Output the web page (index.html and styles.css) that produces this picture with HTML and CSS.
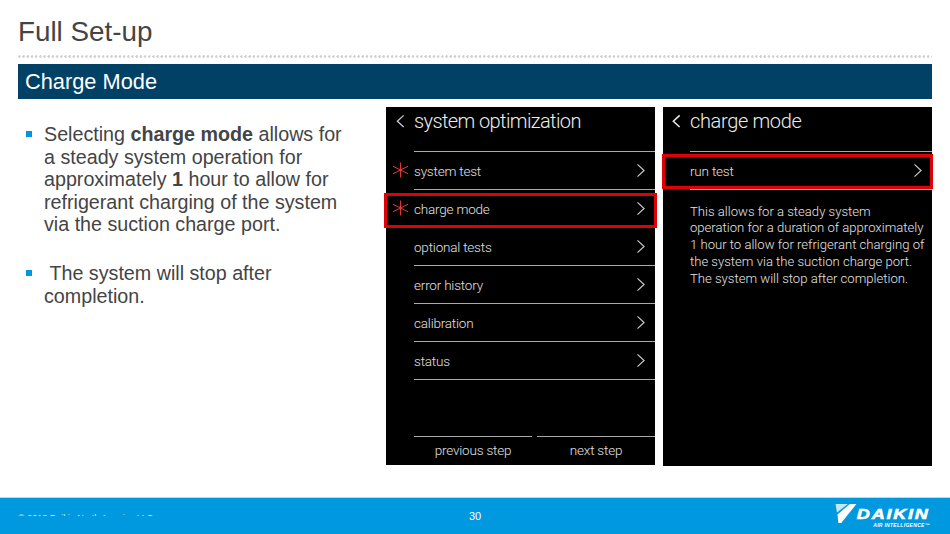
FILE: index.html
```html
<!DOCTYPE html>
<html lang="en">
<head>
  <meta charset="UTF-8" />
  <title>Full Set-up</title>
  <link rel="stylesheet" href="styles.css">
</head>
<body>
  <div class="slide">
    <h1 class="title">Full Set-up</h1>
    <div class="dots"></div>
    <h2 class="band">Charge Mode</h2>

    <div class="content">
      <div class="notes">
        <p class="note">Selecting <b>charge mode</b> allows for a steady system operation for approximately <b>1</b> hour to allow for refrigerant charging of the system via the suction charge port.</p>
        <p class="note">&nbsp;The system will stop after completion.</p>
      </div>

      <!-- left phone screen -->
      <div class="screen screen-left">
        <div class="screen-head">
          <svg class="back" viewBox="0 0 10 16"><path d="M8.5 1.5 1.5 8l7 6.5" /></svg>
          <span>system optimization</span>
        </div>
        <div class="rows">
          <div class="row first">
            <svg class="star" viewBox="0 0 20 20"><path d="M10 0v20M0 5l20 10M20 5 0 15" /></svg>
            <span>system test</span>
            <svg class="chev" viewBox="0 0 10 16"><path d="M1.5 1.5 8.5 8l-7 6.5" /></svg>
          </div>
          <div class="row">
            <svg class="star" viewBox="0 0 20 20"><path d="M10 0v20M0 5l20 10M20 5 0 15" /></svg>
            <span>charge mode</span>
            <svg class="chev" viewBox="0 0 10 16"><path d="M1.5 1.5 8.5 8l-7 6.5" /></svg>
            <div class="hilite hilite-left"></div>
          </div>
          <div class="row">
            <span>optional tests</span>
            <svg class="chev" viewBox="0 0 10 16"><path d="M1.5 1.5 8.5 8l-7 6.5" /></svg>
          </div>
          <div class="row">
            <span>error history</span>
            <svg class="chev" viewBox="0 0 10 16"><path d="M1.5 1.5 8.5 8l-7 6.5" /></svg>
          </div>
          <div class="row">
            <span>calibration</span>
            <svg class="chev" viewBox="0 0 10 16"><path d="M1.5 1.5 8.5 8l-7 6.5" /></svg>
          </div>
          <div class="row">
            <span>status</span>
            <svg class="chev" viewBox="0 0 10 16"><path d="M1.5 1.5 8.5 8l-7 6.5" /></svg>
          </div>
        </div>
        <div class="steps">
          <div class="step step-prev">previous step</div>
          <div class="step step-next">next step</div>
        </div>
      </div>

      <!-- right phone screen -->
      <div class="screen screen-right">
        <div class="screen-head">
          <svg class="back" viewBox="0 0 10 16"><path d="M8.5 1.5 1.5 8l7 6.5" /></svg>
          <span>charge mode</span>
        </div>
        <div class="rows">
          <div class="row first">
            <span>run test</span>
            <svg class="chev" viewBox="0 0 10 16"><path d="M1.5 1.5 8.5 8l-7 6.5" /></svg>
            <div class="hilite hilite-right"></div>
          </div>
        </div>
        <p class="screen-text">This allows for a steady system<br>operation for a duration of approximately<br>1 hour to allow for refrigerant charging of<br>the system via the suction charge port.<br>The system will stop after completion.</p>
      </div>
    </div>

    <div class="footer">
      <div class="copy"><span>© 2018 Daikin North America LLC</span></div>
      <div class="page-num">30</div>
      <div class="logo">
        <svg class="logo-mark" viewBox="0 0 22 20">
          <polygon points="0,0 13,0 1.5,9" fill="#c4e6f7" />
          <polygon points="15,0 22,0 6,20 3,20 2,11" fill="#fff" />
        </svg>
        <div class="logo-text">
          <span class="logo-name">DAIKIN</span>
          <span class="logo-sub">AIR INTELLIGENCE™</span>
        </div>
      </div>
    </div>
  </div>
</body>
</html>
```

FILE: styles.css
```css
html, body {
  margin: 0;
  padding: 0;
  height: 100%;
  overflow: hidden;
  background: #fff;
  font-family: 'Liberation Sans', Arial, sans-serif;
}
.slide {
  width: 950px;
  height: 534px;
  display: flex;
  flex-direction: column;
}
.title {
  margin: 15px 0 0 18px;
  font-size: 27.8px;
  line-height: 33px;
  font-weight: 400;
  color: #444;
}
.dots {
  margin: 7px 18px 0 18px;
  height: 3px;
  background-image: radial-gradient(circle at 1.5px 1.5px, #cfcfcf 1.1px, transparent 1.3px);
  background-size: 4.2px 3px;
}
.band {
  margin: 6px 18px 0 18px;
  height: 35px;
  padding-left: 7px;
  background: #004165;
  color: #fff;
  font-size: 21.8px;
  line-height: 35px;
  font-weight: 400;
}
.content {
  display: flex;
  flex: 1;
  padding-top: 8px;
  padding-left: 26px;
  min-height: 0;
}
.notes {
  width: 318px;
  padding-top: 16px;
  margin-right: 42px;
  color: #444;
  font-size: 19.7px;
  line-height: 22.5px;
}
.note {
  margin: 0 0 26.5px 0;
  padding-left: 18px;
  position: relative;
}
.note::before {
  content: '';
  position: absolute;
  left: 0;
  top: 8px;
  width: 6px;
  height: 6px;
  background: #0097e0;
}
.screen {
  width: 269px;
  height: 358px;
  background: #000;
  color: #e2e2e2;
  font-family: 'Roboto', 'Liberation Sans', sans-serif;
  font-weight: 300;
  display: flex;
  flex-direction: column;
  box-sizing: border-box;
  padding-left: 28px;
}
.screen-right {
  margin-left: 8px;
  height: 359px;
  padding-left: 27px;
}
.screen-head {
  height: 30px;
  padding-top: 1px;
  font-size: 20px;
  line-height: 27px;
  letter-spacing: -0.6px;
  color: #ececec;
  position: relative;
}
.screen-right .screen-head {
  letter-spacing: -0.35px;
}
.back {
  position: absolute;
  left: -18.3px;
  top: 7px;
  width: 9px;
  height: 14.4px;
  fill: none;
  stroke: #cfcfcf;
  stroke-width: 1.4;
}
.screen-right .back {
  stroke: #ececec;
  stroke-width: 1.7;
}
.rows {
  margin-top: 13px;
}
.row {
  height: 37px;
  border-bottom: 1px solid #aaa;
  display: flex;
  align-items: center;
  font-size: 13.5px;
  letter-spacing: -0.2px;
  position: relative;
  padding-right: 9.5px;
  justify-content: space-between;
}
.row.first {
  border-top: 1px solid #aaa;
}
.star {
  position: absolute;
  left: -21px;
  top: 10px;
  width: 15px;
  height: 16px;
  fill: none;
  stroke: #e33a36;
  stroke-width: 1.3;
}
.chev {
  width: 9.5px;
  height: 15px;
  fill: none;
  stroke: #c8c8c8;
  stroke-width: 1.3;
}
.hilite {
  position: absolute;
  border: 3px solid #e00008;
  box-sizing: border-box;
  pointer-events: none;
}
.hilite-left {
  left: -30px;
  right: -2px;
  top: 3px;
  height: 35px;
}
.hilite-right {
  left: -28px;
  right: -1px;
  top: 2px;
  height: 35px;
}
.steps {
  margin-top: auto;
  display: flex;
  gap: 5px;
  font-size: 13.5px;
  letter-spacing: -0.2px;
}
.step {
  height: 28px;
  border-top: 1px solid #aaa;
  text-align: center;
  line-height: 27px;
}
.step-prev { width: 118px; }
.step-next { width: 118px; }
.screen-text {
  margin: 13.5px 0 0 0;
  font-size: 13.1px;
  line-height: 16.8px;
  white-space: nowrap;
  color: #e4e4e4;
}
.footer {
  margin-top: auto;
  height: 37px;
  flex: none;
  background: #0098df;
  border-top: 1px solid #a9dcf5;
  box-sizing: border-box;
  position: relative;
  color: #fff;
}
.copy {
  position: absolute;
  left: 18px;
  top: 15px;
  height: 3px;
  overflow: hidden;
  font-size: 9px;
  line-height: 10px;
  color: #d6effb;
  white-space: nowrap;
}
.page-num {
  position: absolute;
  left: 469px;
  top: 12px;
  font-size: 11px;
  line-height: 12px;
}
.logo {
  position: absolute;
  left: 835px;
  top: 6px;
  display: flex;
}
.logo-mark {
  width: 22px;
  height: 19px;
}
.logo-text {
  padding-top: 4px;
  width: 73px;
  display: flex;
  flex-direction: column;
  align-items: flex-end;
}
.logo-name {
  font-size: 15px;
  line-height: 12px;
  font-weight: 700;
  font-style: italic;
  letter-spacing: 1.5px;
  transform: scaleX(1.2);
  transform-origin: right center;
  -webkit-text-stroke: 0.6px #fff;
}
.logo-sub {
  margin-top: 2px;
  font-size: 5px;
  line-height: 7px;
  font-weight: 700;
  font-style: italic;
  letter-spacing: 0.3px;
}
```
